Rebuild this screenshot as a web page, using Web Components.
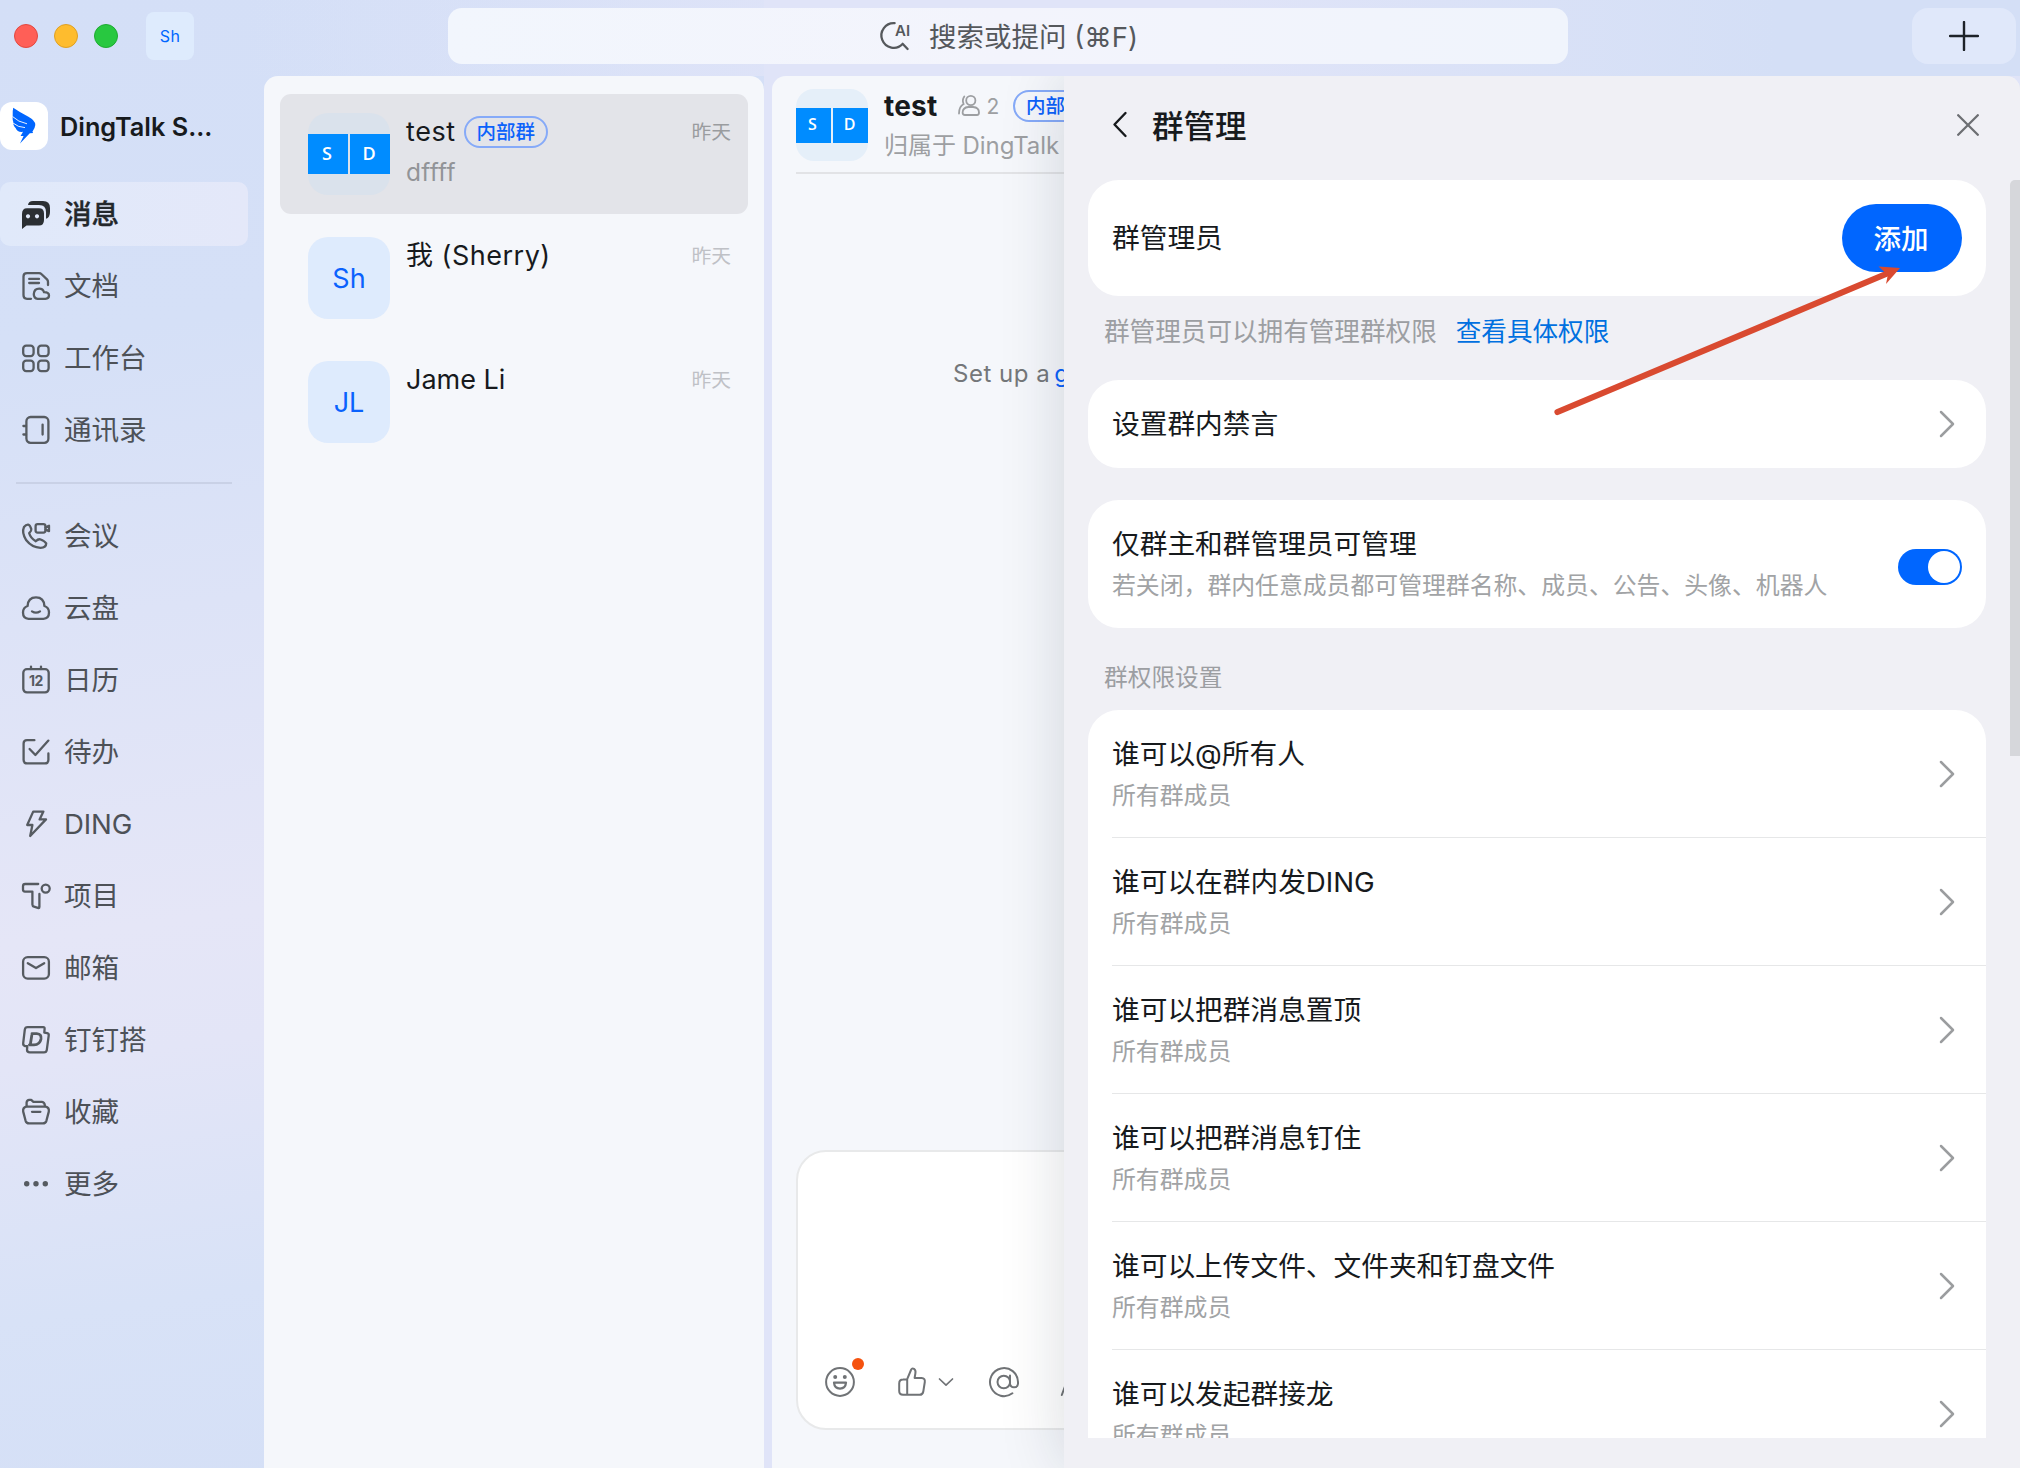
<!DOCTYPE html>
<html lang="zh-CN">
<head>
<meta charset="utf-8">
<title>DingTalk</title>
<style>
html,body{margin:0;width:2020px;height:1468px;overflow:hidden}
body{font-family:Inter,"Noto Sans CJK SC",sans-serif;font-size:28px;color:#171a1d}
</style>
</head>
<body>
<dt-app></dt-app>
<script>
function define(name, css, html) {
  const tpl = document.createElement('template');
  tpl.innerHTML = '<style>*{box-sizing:border-box}:host{display:block;box-sizing:border-box}' + css + '</style>' + (typeof html === 'string' ? html : '');
  customElements.define(name, class extends HTMLElement {
    constructor() {
      super();
      this.attachShadow({ mode: 'open' }).appendChild(tpl.content.cloneNode(true));
    }
    connectedCallback() {
      if (typeof html === 'function' && !this.ready) {
        this.ready = true;
        const part = document.createElement('template');
        part.innerHTML = html(this);
        this.shadowRoot.appendChild(part.content.cloneNode(true));
      }
    }
  });
}

const ICONS = {
  msg: '<g fill="#2b2f33" stroke="none"><path d="M6 5Q6.5 1 11 1H21Q28 1 28 8V12Q28 17.5 24 18.8V12Q24 5 17 5Z"/><path fill-rule="evenodd" d="M5 8.3H17Q22 8.3 22 13.5V20Q22 25.5 17 25.5H4.5L0 29V14Q0 8.3 5 8.3ZM6 14.2a2.1 2.1 0 1 0 .01 0ZM15 14.2a2.1 2.1 0 1 0 .01 0Z"/></g>',
  doc: '<path d="M9 26.8H5Q1.5 26.8 1.5 23.3V4.5Q1.5 1.2 5 1.2H17Q18.6 1.2 19.6 2.2L25 7.4Q26 8.4 26 10V13M7.2 6.9H17M7.2 11H17"/><path d="M15.6 26.8Q11.8 26.4 11.8 22Q12.2 16.6 17.2 16.6Q21 16.6 22 20.2Q27 20.2 27 23.6Q27 26.8 23.5 26.8Z"/>',
  work: '<rect x="1.2" y="1.7" width="10.4" height="10.4" rx="3"/><rect x="16.2" y="1.7" width="10.4" height="10.4" rx="3"/><rect x="1.2" y="16.7" width="10.4" height="10.4" rx="3"/><rect x="16.2" y="16.7" width="10.4" height="10.4" rx="3"/>',
  contact: '<rect x="4.4" y="1" width="22" height="25.8" rx="4.2"/><path d="M1.4 10H4M1.4 18.5H4M20.6 8.6V18.6"/>',
  meet: '<path d="M6.2 2.6Q8 2.8 9.3 7.2Q9.6 9 7.2 11.2Q8.5 16 13.8 19.2Q16 17 18 17.3Q23 19.3 24.2 21.4Q24.2 25.4 18.5 25.8Q10 25.6 4.3 18.3Q-.6 10.6 2 5Q4 2.4 6.2 2.6Z"/><rect x="13.6" y="2.2" width="9.8" height="8.4" rx="2"/><path d="M23.6 5.4L27 3.8V9.2L23.6 7.6"/>',
  cloud: '<path d="M6.6 24.9Q1 24.6 1 18.6Q1 13.6 5.6 12Q6 3.3 14 3.3Q22 3.3 22.4 12Q27 13.6 27 18.6Q27 24.6 21.4 24.9Z"/><path d="M10 17.4Q14 20 18 17.4"/>',
  cal: '<rect x="1.3" y="3.2" width="25.4" height="23.2" rx="3.6"/><path d="M9 .6V3M19 .6V3"/><text x="14" y="19.8" text-anchor="middle" font-family="Inter" font-size="14" font-weight="700" letter-spacing="-.4" fill="#565b61" stroke="none">12</text>',
  todo: '<path d="M12.4 2.2H5Q1.6 2.2 1.6 5.6V22Q1.6 25.4 5 25.4H23Q26.4 25.4 26.4 22V15.4"/><path d="M7.6 11L13.4 17L26.4 2.6"/>',
  ding: '<path d="M11.2 1.6H21.4L17.6 9.4H24L8.2 26L10.4 15H5.2Z"/>',
  proj: '<path d="M16.2 2H3.2Q1 2 1 4.2V7.6Q1 9.6 3 9.6H10.4V22.6Q10.4 24.2 12 24.7L16.6 26.2Q17.4 26.2 17.4 25V12"/><circle cx="23.7" cy="6.6" r="4"/>',
  mail: '<rect x="1.1" y="3.2" width="25.8" height="21.4" rx="4.6"/><path d="M5.8 9.2L14 14L22.2 9.2"/>',
  da: '<path d="M5.6 1.2H21.2Q22.8 1.2 22.6 2.8L22.3 6.6L25.2 7.2Q27 7.6 26.7 9.6L24.8 23.8Q24.4 26.4 22 26.4H7.8Q5 26.4 5 23.8L5.3 20.2L3 20Q.9 19.6 1.2 17.2L2.8 3.6Q3.2 1.2 5.6 1.2Z"/><path stroke-width="2.8" d="M10 7.6H14.8Q19.8 8 19 13Q17.8 19 11.6 18.8H7.4M9.8 9.2L8.4 18"/>',
  fav: '<path d="M4.4 8.6H23.6Q27.4 9.2 26.8 13.6L24.4 22.8Q23.6 25.4 20.8 25.4H7.2Q4.4 25.4 3.6 22.8L1.2 13.6Q.6 9.2 4.4 8.6ZM10 13.8H18.4"/><path d="M4.6 8V4.4Q5 2 7.2 1.8H9.2L11.4 3.8H20Q22.6 4 23 8"/>',
  more: '<g fill="#565b61" stroke="none"><circle cx="4.7" cy="13.8" r="2.7"/><circle cx="14" cy="13.8" r="2.7"/><circle cx="23.3" cy="13.8" r="2.7"/></g>'
};

define('nav-item', `
  :host{display:flex;align-items:center;gap:14px;width:248px;height:64px;padding-left:22px;border-radius:0 10px 10px 0;color:#4d5157;font-size:27.6px;line-height:40px;letter-spacing:-.1px}
  :host([active]){background:linear-gradient(90deg,#e0e9fa,#e4e8f9);border-radius:10px;color:#24282c;font-weight:500;-webkit-text-stroke:.3px #24282c}
  svg{flex:none;overflow:visible;fill:none;stroke:#565b61;stroke-width:2.3;stroke-linecap:round;stroke-linejoin:round}
`, el => `<svg width="28" height="28" viewBox="0 0 28 28">${ICONS[el.getAttribute('icon')]}</svg><span><slot></slot></span>`);

define('side-nav', `
  :host{width:264px;flex:none;display:flex;flex-direction:column;padding-top:26px}
  .org{display:flex;align-items:center;gap:12px;height:48px;margin-bottom:32px;font-weight:600;font-size:25.3px;white-space:nowrap}
  .logo{width:48px;height:48px;border-radius:12px;background:#fff}
  .group{display:flex;flex-direction:column;gap:8px}
  .rule{height:2px;width:216px;margin:20px 0 20px 16px;background:#c9d1e6}
`, `
  <div class="org">
    <svg class="logo" viewBox="0 0 48 48"><path fill="#0066ff" d="M13.2 5.8Q20 10.5 28 14.5Q35.3 18.2 35.3 23Q35.2 25.6 32.4 29.8L33.2 31L29.8 31.2L20 41.6L23.6 34H20.6L23 29.8Q17.5 30.6 15.6 26Q13 24 13.2 19.6Q12.4 18 12.7 13Q12.5 9 13.2 5.8Z"/><path fill="none" stroke="#fff" stroke-width=".9" d="M12.5 14.5Q18 20 27 21.8M13 21Q18 25.4 25 25.6"/></svg>
    <span>DingTalk S...</span>
  </div>
  <div class="group">
    <nav-item icon="msg" active>消息</nav-item><nav-item icon="doc">文档</nav-item><nav-item icon="work">工作台</nav-item><nav-item icon="contact">通讯录</nav-item>
  </div>
  <div class="rule"></div>
  <div class="group">
    <nav-item icon="meet">会议</nav-item><nav-item icon="cloud">云盘</nav-item><nav-item icon="cal">日历</nav-item><nav-item icon="todo">待办</nav-item><nav-item icon="ding">DING</nav-item><nav-item icon="proj">项目</nav-item><nav-item icon="mail">邮箱</nav-item><nav-item icon="da">钉钉搭</nav-item><nav-item icon="fav">收藏</nav-item><nav-item icon="more">更多</nav-item>
  </div>
`);

define('top-bar', `
  :host{display:flex;height:76px;flex:none;padding:8px 4px 12px 14px;align-items:center}
  .lights{display:flex;gap:16px}
  i{width:24px;height:24px;border-radius:50%;background:#ff5f57;border:1px solid #e2483f}
  i+i{background:#febc2e;border-color:#dfa023}i+i+i{background:#28c840;border-color:#1eab31}
  .me{width:48px;height:48px;margin-left:28px;border-radius:8px;background:#deebfd;color:#0066ff;font-size:16px;letter-spacing:.3px;display:flex;align-items:center;justify-content:center}
  .search{width:1120px;height:56px;margin-left:254px;border-radius:14px;background:linear-gradient(90deg,#f2f6fd,#f3f4fc 50%,#f0f4fc);color:#55585c;display:flex;align-items:center;padding-left:433px;gap:18px;font-size:27.5px}
  .search svg{overflow:visible;flex:none}
  .search span{padding-bottom:2px}
  .plus{width:104px;height:56px;margin-left:auto;border-radius:16px;background:#e0e8fa;display:flex;align-items:center;justify-content:center}
`, `
  <div class="lights"><i></i><i></i><i></i></div>
  <div class="me">Sh</div>
  <div class="search">
    <svg width="30" height="30" viewBox="0 0 30 30" fill="none" stroke="#55585c" stroke-width="2.3" stroke-linecap="round"><path d="M13.6 2.2A12.3 12.3 0 1 0 21.6 23M21.6 22.8L26.6 28"/><text x="14" y="15" font-family="Inter" font-size="15" font-weight="600" fill="#55585c" stroke="none">AI</text></svg>
    <span>搜索或提问 (⌘F)</span>
  </div>
  <div class="plus"><svg width="30" height="30" viewBox="0 0 30 30" stroke="#1d2228" stroke-width="2.4" stroke-linecap="round"><path d="M15 1V29M1 15H29"/></svg></div>
`);

define('group-tag', `:host{display:inline-flex;flex:none;align-items:center;justify-content:center;width:84px;height:32px;border:2px solid #86aaf8;border-radius:16px;color:#0b62fb;font-size:19.5px;font-weight:500;line-height:28px;letter-spacing:0}`, `<slot></slot>`);

define('user-avatar', `
  :host{width:82px;height:82px;flex:none;border-radius:20px;background:#deebfd;color:#0a62fd;font-size:27px;display:flex;align-items:center;justify-content:center;overflow:hidden}
  :host([pair]){gap:2px;background:#dae2ec;color:#fff;font-size:18px}
  :host([small]){width:72px;height:72px;border-radius:18px;background:#e5eff9;font-size:16px}
  b{font-weight:600;font-family:"Open Sans";flex:1;height:40px;padding:0 2px 2px 0;background:#008cff;display:flex;align-items:center;justify-content:center}
  :host([small]) b{height:35px}
`, el => el.hasAttribute('pair') ? '<b>S</b><b>D</b>' : '<slot></slot>');

define('chat-row', `
  :host{display:flex;height:120px;padding:0 17px 0 28px;gap:16px;align-items:center;border-radius:11px}
  :host([active]){background:#e3e4e9}
  .body{flex:1;height:82px;padding-top:1px;display:flex;flex-direction:column}
  .top{display:flex;align-items:center;height:36px}
  .name{line-height:36px;font-size:27px;white-space:pre;letter-spacing:var(--track,0)}
  group-tag{margin-left:8px}
  time{margin-left:auto;font-size:19.8px;color:#bfc1c6;line-height:30px}
  :host([active]) time{color:#9a9c9f}
  .sub{font-size:24.5px;line-height:36px;margin-top:4px;color:#929498;letter-spacing:.3px}
`, el => `<slot name="avatar"></slot><div class="body"><div class="top"><span class="name">${el.getAttribute('name')}</span>${el.hasAttribute('tag') ? `<group-tag>${el.getAttribute('tag')}</group-tag>` : ''}<time>昨天</time></div><div class="sub"><slot></slot></div></div>`);

define('chat-list', `
  :host{width:500px;flex:none;border-radius:14px 14px 0 0;background:#f5f7fb;padding:18px 16px;display:flex;flex-direction:column;gap:4px}
`, `
  <chat-row active name="test" tag="内部群" style="--track:.6px"><user-avatar pair slot="avatar"></user-avatar>dffff</chat-row>
  <chat-row name="我 (Sherry)" style="--track:.5px"><user-avatar slot="avatar">Sh</user-avatar></chat-row>
  <chat-row name="Jame Li"><user-avatar slot="avatar">JL</user-avatar></chat-row>
`);

define('chat-header', `
  :host{height:98px;flex:none;margin-left:24px;padding-top:13px;border-bottom:2px solid #e2e3e6;display:flex;gap:16px;white-space:nowrap;overflow:hidden}
  .top{display:flex;align-items:center;height:34px}
  .name{font-weight:700;font-size:28px;line-height:34px;letter-spacing:.2px}
  .count{display:flex;align-items:center;gap:6px;margin:0 14px 0 21px;color:#9d9fa2;font-size:21px}
  .org{font-size:24px;line-height:36px;margin-top:5px;color:#9d9fa2;letter-spacing:-.05px}
`, `
  <user-avatar pair small></user-avatar>
  <div>
    <div class="top"><span class="name">test</span>
      <span class="count"><svg width="22" height="22" viewBox="0 0 22 22" fill="none" stroke="#9d9fa2" stroke-width="1.8" stroke-linecap="round"><circle cx="12.8" cy="5.5" r="4.6"/><path d="M10.3 12H15Q21 12.5 21 17.5Q21 20 19 20H7Q4.6 20 4.6 17.5Q4.8 12.5 10.3 12ZM6.3 1.5Q3.8 5 5.6 9Q1 11.5 1 18.5"/></svg>2</span>
      <group-tag>内部群</group-tag></div>
    <div class="org">归属于 DingTalk</div>
  </div>
`);

define('chat-composer', `
  :host{height:280px;flex:none;margin:0 25px 38px 24px;border:2px solid #e8e9ea;border-radius:30px;background:#fff;display:flex;align-items:flex-end;padding:0 0 31px 27px}
  svg{overflow:visible;flex:none;fill:none;stroke:#707376;stroke-width:2;stroke-linecap:round;stroke-linejoin:round}
`, `
  <svg width="30" height="30" viewBox="0 0 30 30"><circle cx="15" cy="15" r="13.9"/><g fill="#707376" stroke="none"><circle cx="10.2" cy="10" r="2"/><circle cx="19.8" cy="10" r="2"/></g><path stroke-width="2.2" d="M9 15.6H21Q20.5 21.4 15 21.6Q9.5 21.4 9 15.6Z"/><circle cx="33" cy="-3" r="6" fill="#f5520f" stroke="none"/></svg>
  <svg style="margin-left:43px" width="28" height="30" viewBox="0 0 28 30"><path d="M1.2 16.5Q1.2 12.6 5 12.5L9.2 12.2L13 3Q13.8 .8 16 1.8Q18 3 17.4 6.2L16.6 11H23.6Q27.3 11.4 26.8 15L25.3 24.5Q24.8 27.8 21.6 27.8H5Q1.2 27.6 1.2 24ZM9.2 12.4V27.6"/></svg>
  <svg style="margin-left:13px" width="14" height="30" viewBox="0 0 14 30"><path stroke-width="1.7" d="M.5 12L7 18.2L13.5 12"/></svg>
  <svg style="margin-left:36px" width="30" height="30" viewBox="0 0 30 30"><path d="M23.4 26.3A14 14 0 1 1 29 15V16.5Q28.7 20.3 25 20.3Q21.3 20.2 21 16.5V8.5"/><circle cx="14.8" cy="15" r="6.3"/></svg>
  <svg style="margin-left:42px" width="30" height="30" viewBox="0 0 30 30"><path d="M.8 28L10 3L19 28M4 20H16"/></svg>
`);

define('chat-pane', `
  :host{position:relative;flex:1;height:1392px;border-radius:14px 14px 0 0;background:#f5f7fb;overflow:hidden;display:flex;flex-direction:column}
  .flow{flex:1;padding:182px 0 0 181px;font-size:24px;line-height:36px;letter-spacing:.5px;color:#74777a}
  em{font-style:normal;color:#0b62fb;margin-left:-3px}
  slot{display:contents}
`, `
  <chat-header></chat-header>
  <div class="flow">Set up a <em>g</em></div>
  <chat-composer></chat-composer>
  <slot></slot>
`);

define('more-arrow', `:host{flex:none;width:16px;height:28px;margin-right:7px}svg{display:block}`, `<svg width="16" height="28" viewBox="0 0 16 28" fill="none" stroke="#9b9d9f" stroke-width="2.5" stroke-linecap="round" stroke-linejoin="round"><path d="M2 2L14 14L2 26"/></svg>`);
define('toggle-switch', `:host{width:64px;height:36px;flex:none;border-radius:18px;background:#0066ff;padding:2px;display:flex;justify-content:flex-end;margin-top:6px}i{width:32px;height:32px;border-radius:50%;background:#fff}`, `<i></i>`);
define('setting-card', `:host{flex:none;width:898px;background:#fff;border-radius:31px}`, `<slot></slot>`);
define('setting-row', `
  :host{display:flex;align-items:center;justify-content:space-between;margin-left:24px;padding-right:24px;height:128px;white-space:nowrap}
  :host([line]){border-bottom:1px solid #e6e7e8}
  .t{font-size:27.7px;line-height:40px}
  .s{font-size:23.85px;line-height:36px;margin-top:4px;color:#a1a3a5}
`, el => `<div><div class="t">${el.getAttribute('label')}</div>${el.hasAttribute('sub') ? `<div class="s">${el.getAttribute('sub')}</div>` : ''}</div><slot><more-arrow></more-arrow></slot>`);

define('add-button', `:host{width:120px;height:68px;padding:0 2px 2px 0;border-radius:34px;background:#0066ff;color:#fff;font-size:27.5px;font-weight:500;display:flex;align-items:center;justify-content:center}`, `<slot></slot>`);

define('manage-drawer', `
  :host{position:absolute;left:292px;top:0;width:956px;height:1392px;background:#f0f0f5;box-shadow:0 0 60px rgba(20,30,50,.16);display:flex;flex-direction:column}
  header{height:104px;flex:none;display:flex;align-items:center;padding:0 41px 6px 48px;font-size:31.5px;font-weight:500}
  header svg{fill:none;stroke-linecap:round;stroke-linejoin:round}
  header span{margin-left:24px;padding-bottom:3px}
  .close{margin-left:auto}
  .scroll{height:1258px;overflow:hidden;display:flex;justify-content:space-between;padding-left:24px}
  .col{display:flex;flex-direction:column}
  .bar{width:10px;height:576px;background:#d6d7db;border-radius:5px 0 0 0}
  .note{height:84px;flex:none;display:flex;gap:19px;padding:16px 0 0 16px;font-size:25.6px;line-height:40px;color:#9c9ea2}
  .note a{color:#0070e0}
  .label{height:82px;flex:none;padding:32px 0 0 16px;font-size:23.7px;line-height:36px;color:#9c9ea2}
`, `
  <header>
    <svg width="16" height="28" viewBox="0 0 16 28" stroke="#171a1d" stroke-width="2.4"><path d="M13.5 2L2.500 13.5L13.5 25"/></svg>
    <span>群管理</span>
    <svg class="close" width="22" height="22" viewBox="0 0 22 22" stroke="#6d6f73" stroke-width="2.3"><path d="M1.2 1.2L20.8 20.8M20.8 1.2L1.2 20.8"/></svg>
  </header>
  <div class="scroll">
    <div class="col">
      <setting-card><setting-row style="height:116px" label="群管理员"><add-button>添加</add-button></setting-row></setting-card>
      <div class="note"><span>群管理员可以拥有管理群权限</span><a>查看具体权限</a></div>
      <setting-card style="margin-bottom:32px"><setting-row style="height:88px" label="设置群内禁言"></setting-row></setting-card>
      <setting-card><setting-row label="仅群主和群管理员可管理" sub="若关闭，群内任意成员都可管理群名称、成员、公告、头像、机器人"><toggle-switch></toggle-switch></setting-row></setting-card>
      <div class="label">群权限设置</div>
      <setting-card>
        <setting-row line label="谁可以@所有人" sub="所有群成员"></setting-row>
        <setting-row line label="谁可以在群内发DING" sub="所有群成员"></setting-row>
        <setting-row line label="谁可以把群消息置顶" sub="所有群成员"></setting-row>
        <setting-row line label="谁可以把群消息钉住" sub="所有群成员"></setting-row>
        <setting-row line label="谁可以上传文件、文件夹和钉盘文件" sub="所有群成员"></setting-row>
        <setting-row line label="谁可以发起群接龙" sub="所有群成员"></setting-row>
      </setting-card>
    </div>
    <div class="bar"></div>
  </div>
`);

define('pointer-arrow', `:host{position:absolute;left:1550px;top:260px;width:360px;height:160px;pointer-events:none}svg{display:block}`, `
  <svg width="360" height="160" viewBox="1550 260 360 160"><path d="M1557.5 412L1886 274" fill="none" stroke="#d94a30" stroke-width="6.2" stroke-linecap="round"/><path fill="#d94a30" d="M1900 268L1878.5 266.5L1884.5 272L1887.5 276.5L1886 284Z"/></svg>
`);

define('dt-app', `
  :host{position:relative;width:2020px;height:1468px;display:flex;flex-direction:column;
    background:linear-gradient(90deg,rgba(213,223,247,0) 60%,#d4dff6 88%) 0 0/100% 76px no-repeat,
      linear-gradient(90deg,rgba(224,228,248,0) 12%,#e0e4f8 45%) 0 0/100% 76px no-repeat,
      linear-gradient(172deg,#d4dff7 0%,#d5e0f7 22%,#dde3f7 40%,#e5e6f7 60%,#e3e5f7 68%,#d8e2f7 84%,#d4dff6 100%) 0 0/764px 100% no-repeat,#e0e4f8}
  .main{flex:1;display:flex}
  chat-pane{margin-left:8px}
`, `
  <top-bar></top-bar>
  <div class="main"><side-nav></side-nav><chat-list></chat-list><chat-pane><manage-drawer></manage-drawer></chat-pane></div>
  <pointer-arrow></pointer-arrow>
`);
</script>
</body>
</html>
